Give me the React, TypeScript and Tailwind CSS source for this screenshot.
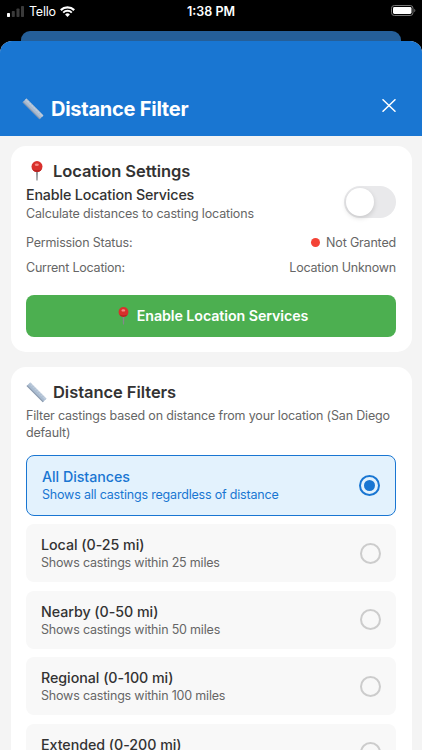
import { useState } from "react";

const options = [
  { title: "All Distances", text: "Shows all castings regardless of distance" },
  { title: "Local (0-25 mi)", text: "Shows castings within 25 miles" },
  { title: "Nearby (0-50 mi)", text: "Shows castings within 50 miles" },
  { title: "Regional (0-100 mi)", text: "Shows castings within 100 miles" },
  { title: "Extended (0-200 mi)", text: "Shows castings within 200 miles" },
];

function Ruler({ className }: { className?: string }) {
  return (
    <svg className={className} viewBox="0 0 22 22" aria-hidden="true">
      <path d="M0.6 4.3L4.4 0.5L21.4 17.5L17.6 21.3Z" fill="#a9bbd0" />
      <path d="M0.6 4.3L1.4 3.5L18.4 20.5L17.6 21.3Z" fill="#8e9bae" />
      <path d="M3 1.9L4.4 0.5L21.4 17.5L20 18.9Z" fill="#bccadb" />
      <path
        d="M5.8 1.9l-1.3 1.3M7.9 4l-1.3 1.3M10 6.1L8.7 7.4M12.1 8.2l-1.3 1.3M14.2 10.3l-1.3 1.3M16.3 12.4L15 13.7M18.4 14.5l-1.3 1.3"
        stroke="#9aabc0"
        strokeWidth="0.5"
      />
    </svg>
  );
}

function Pin({ className }: { className?: string }) {
  return (
    <svg className={className} viewBox="0 0 12 20" aria-hidden="true">
      <path d="M5 9h2l-0.4 10.4h-1.2z" fill="#85888c" />
      <circle cx="6" cy="5.6" r="5.5" fill="#d9302c" />
      <path d="M1.2 8a5.4 5.4 0 0 0 9.6 0c-2 1.6-7.6 1.6-9.6 0z" fill="#b52423" />
      <ellipse cx="5.8" cy="3.8" rx="2" ry="1.3" fill="#f58a83" />
    </svg>
  );
}

function StatusBar() {
  return (
    <div className="relative flex h-[31px] items-start justify-between pl-[7px] pr-[6px] pt-[4px] text-white">
      <div className="flex items-center">
        <svg className="mr-[5px] h-[11px] w-[17px]" viewBox="0 0 17 11">
          <rect x="0" y="7" width="3" height="4" rx="0.7" fill="#fff" />
          <rect x="4.8" y="5" width="3" height="6" rx="0.7" fill="#3a3a3a" />
          <rect x="9.5" y="2.5" width="3" height="8.5" rx="0.7" fill="#3a3a3a" />
          <rect x="14" y="0" width="3" height="11" rx="0.7" fill="#3a3a3a" />
        </svg>
        <span className="w-[26px] text-[12.5px] leading-[15px] tracking-[-0.25px]">Tello</span>
        <svg className="ml-[5px] h-[11px] w-[15px]" viewBox="0 0 15 11">
          <path d="M0.8 4.1a9.6 9.6 0 0 1 13.4 0" fill="none" stroke="#fff" strokeWidth="2.2" />
          <path d="M3.2 6.6a6.2 6.2 0 0 1 8.6 0" fill="none" stroke="#fff" strokeWidth="2" />
          <path d="M5.1 8.4a3.5 3.5 0 0 1 4.8 0L7.5 10.9z" fill="#fff" />
        </svg>
      </div>
      <span className="absolute inset-x-0 top-[4px] text-center text-[12.5px] font-semibold leading-[15px]">
        1:38 PM
      </span>
      <svg className="mt-[1px] h-[11px] w-[25px]" viewBox="0 0 25 11">
        <rect x="0.5" y="0.5" width="21.5" height="10" rx="2.8" fill="none" stroke="#777" />
        <rect x="2" y="2" width="18.5" height="7" rx="1.4" fill="#fff" />
        <path d="M23.3 3.8c1.4 0.5 1.4 2.9 0 3.4z" fill="#777" />
      </svg>
    </div>
  );
}

export default function App() {
  const [selected, setSelected] = useState(0);
  const [enabled, setEnabled] = useState(false);

  return (
    <div className="flex h-[750px] w-[422px] flex-col overflow-hidden bg-black font-['Inter','Liberation_Sans',sans-serif]">
      <StatusBar />
      {/* Sheet underneath */}
      <div className="mx-[21px] h-[10px] shrink-0 rounded-t-[9px] bg-[#255f99]" />

      <div className="flex min-h-0 flex-1 flex-col overflow-hidden rounded-t-[12px] bg-[#f4f4f4]">
        <header className="flex h-[94.5px] shrink-0 items-end justify-between bg-[#1976d2] pb-[14px] pl-[22px] pr-[26px] text-white">
          <h1 className="flex items-center text-[20px] font-bold leading-[26px] tracking-[-0.25px]">
            <Ruler className="mr-[7px] size-[22px]" />
            Distance Filter
          </h1>
          <button aria-label="Close" className="mb-[9.5px]">
            <svg className="h-[13px] w-[14px]" viewBox="0 0 14 13">
              <path d="M1 0.7l12 11.6M13 0.7L1 12.3" stroke="#fff" strokeWidth="1.5" strokeLinecap="round" />
            </svg>
          </button>
        </header>

        <main className="flex flex-col gap-[15px] px-[10.5px] pt-[10.5px]">
          <section className="h-[206px] shrink-0 rounded-[15px] bg-white px-[15.5px] pt-[15px]">
            <h2 className="flex h-5 items-center text-[16.5px] font-semibold leading-5 tracking-[-0.08px] text-[#333]">
              <Pin className="ml-[5px] mr-[10px] h-[20px] w-[12px]" />
              Location Settings
            </h2>
            <div className="mt-[4px] flex items-start justify-between">
              <div>
                <h3 className="text-[14.25px] font-medium leading-5 tracking-[-0.15px] text-[#333]">
                  Enable Location Services
                </h3>
                <p className="text-[12.5px] leading-[17px] tracking-[-0.15px] text-[#666]">
                  Calculate distances to casting locations
                </p>
              </div>
              <button
                role="switch"
                aria-checked={enabled}
                aria-label="Enable Location Services"
                onClick={() => setEnabled(!enabled)}
                className={`mt-[1px] flex h-[32px] w-[52px] rounded-full p-[2px] ${
                  enabled ? "justify-end bg-[#4caf50]" : "bg-[#e9e9eb]"
                }`}
              >
                <span className="size-[28px] rounded-full bg-white shadow-[0_2px_5px_rgba(0,0,0,0.15)]" />
              </button>
            </div>
            <div className="mt-[11.5px] flex justify-between text-[12.5px] leading-[18px] tracking-[-0.18px] text-[#666]">
              <span>Permission Status:</span>
              <span className="flex items-center gap-[6px]">
                <span className="size-[9px] rounded-full bg-[#f44336]" />
                Not Granted
              </span>
            </div>
            <div className="mt-[7px] flex justify-between text-[12.5px] leading-[18px] tracking-[-0.22px] text-[#666]">
              <span>Current Location:</span>
              <span>Location Unknown</span>
            </div>
            <button className="mt-[18px] flex h-[42px] w-full items-center justify-center rounded-[8px] bg-[#4caf50] pl-[4px] text-[14.25px] font-semibold tracking-[-0.08px] text-white">
              <Pin className="mr-[8px] h-[18px] w-[11px]" />
              Enable Location Services
            </button>
          </section>

          <section className="shrink-0 rounded-[15px] bg-white px-[15.5px] pb-[15px] pt-[15px]">
            <h2 className="flex h-5 items-center text-[16.5px] font-semibold leading-5 tracking-[-0.05px] text-[#333]">
              <Ruler className="mr-[6px] size-[21px]" />
              Distance Filters
            </h2>
            <p className="mt-[6px] text-[12.5px] leading-[16.5px] tracking-[-0.17px] text-[#666]">
              Filter castings based on distance from your location (San Diego default)
            </p>
            <div className="mt-[14px] flex flex-col gap-[8.5px]">
              {options.map((o, i) => {
                const active = i === selected;
                return (
                  <button
                    key={o.title}
                    onClick={() => setSelected(i)}
                    className={`flex items-center justify-between rounded-[8px] text-left ${
                      active
                        ? "h-[60.5px] border border-[#1976d2] bg-[#e3f2fd] px-[15px]"
                        : "h-[58px] bg-[#f8f8f8] px-[15px]"
                    }`}
                  >
                    <span className="pt-[1px]">
                      <span
                        className={`block text-[14.25px] font-medium leading-[19px] tracking-[-0.04px] ${
                          active ? "text-[#1976d2]" : "text-[#333]"
                        }`}
                      >
                        {o.title}
                      </span>
                      <span
                        className={`block text-[12.5px] leading-[18px] tracking-[-0.19px] ${
                          active ? "text-[#1976d2]" : "text-[#666]"
                        }`}
                      >
                        {o.text}
                      </span>
                    </span>
                    <span
                      className={`flex size-[21px] items-center justify-center rounded-full border-2 ${
                        active ? "border-[#1976d2]" : "border-[#ccc]"
                      }`}
                    >
                      {active && <span className="size-[11px] rounded-full bg-[#1976d2]" />}
                    </span>
                  </button>
                );
              })}
            </div>
          </section>
        </main>
      </div>
    </div>
  );
}
